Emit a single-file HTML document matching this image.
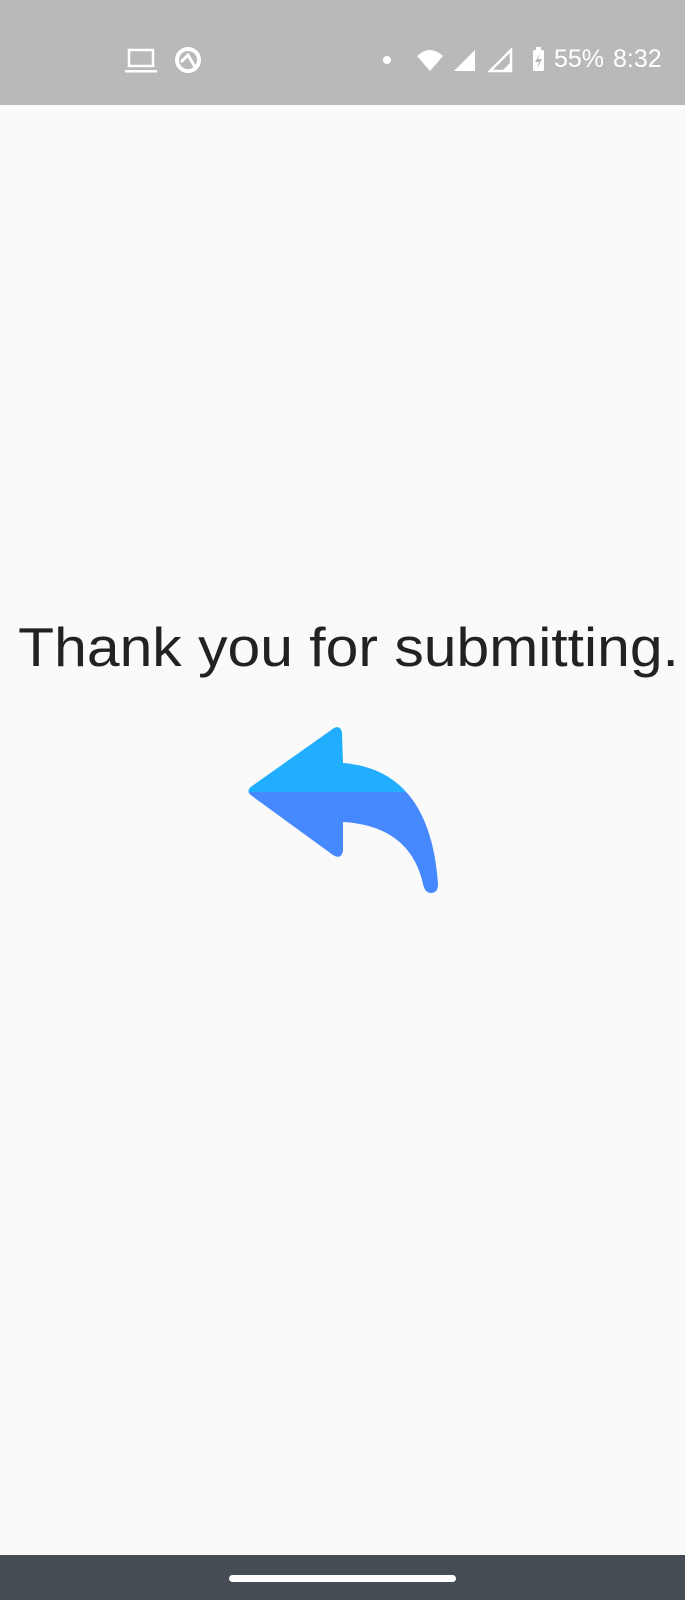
<!DOCTYPE html>
<html><head><meta charset="utf-8"><style>
html,body{margin:0;padding:0;width:685px;height:1600px;background:#fafafa;overflow:hidden;font-family:"Liberation Sans",sans-serif;position:relative}
.sb{position:absolute;left:0;top:0;width:685px;height:105px;background:#b9b9b9}
.sb .t{position:absolute;top:44px;font-size:25px;color:#fff;line-height:30px}
.msg{position:absolute;left:6px;width:685px;top:612px;text-align:center;font-size:55px;color:#222;line-height:70px;white-space:nowrap;transform:scaleX(1.07);transform-origin:342px 0}
.nav{position:absolute;left:0;top:1555px;width:685px;height:45px;background:#454c53}
.pill{position:absolute;left:229px;top:1575px;width:227px;height:7px;border-radius:4px;background:#fff}
</style></head><body>
<div class="sb">
<svg width="685" height="105" style="position:absolute;left:0;top:0">
<rect x="129" y="50" width="24" height="16" fill="none" stroke="#fff" stroke-width="2.5"/>
<rect x="125" y="70" width="32" height="2.5" fill="#fff"/>
<circle cx="188" cy="60" r="11" fill="none" stroke="#fff" stroke-width="4"/>
<path d="M181,62 L188,55 L195,67" fill="none" stroke="#fff" stroke-width="3"/>
<circle cx="387" cy="60" r="4" fill="#fff"/>
<path d="M417,56 Q430,44 443,56 L430,71 Z" fill="#fff"/>
<path d="M454,71 L475,50 L475,71 Z" fill="#fff"/>
<path d="M490,71 L511,50 L511,71 Z" fill="none" stroke="#fff" stroke-width="2.5"/>
<path d="M502,71 L511,62 L511,71Z" fill="#fff"/>
<rect x="533" y="50" width="11" height="21" rx="1.5" fill="#fff"/>
<rect x="536" y="47" width="5" height="4" fill="#fff"/>
<path d="M540,53 L535,62 L539,62 L537,69 L542,59 L538,59 Z" fill="#b9b9b9"/>
</svg>
<div class="t" style="left:554px">55%</div>
<div class="t" style="left:613px">8:32</div>
</div>
<div class="msg">Thank you for submitting.</div>
<svg width="685" height="1600" style="position:absolute;left:0;top:0">
<defs><linearGradient id="g" x1="0" y1="725" x2="0" y2="895" gradientUnits="userSpaceOnUse">
<stop offset="0.394" stop-color="#22aeff"/><stop offset="0.394" stop-color="#4689ff"/></linearGradient></defs>
<path d="M334,728 Q340,725 342,732 L343,763 Q430,770 438,884 Q438,893 431,893 Q425,893 423,884 Q410,826 343,822 L343,851 Q341,860 333,855 L252,796 Q245,791 252,786 Z" fill="url(#g)"/>
</svg>
<div class="nav"></div><div class="pill"></div>
</body></html>
